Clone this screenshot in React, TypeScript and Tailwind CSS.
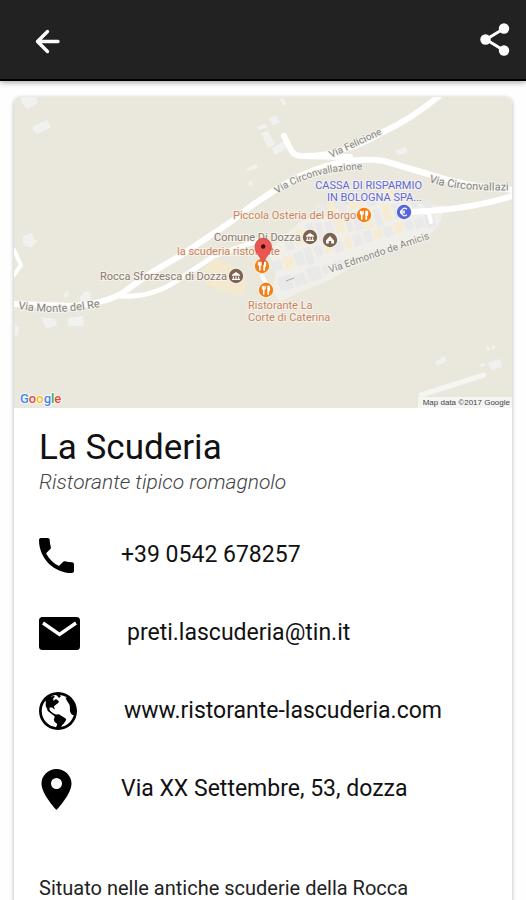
import React from "react";
import { IoMdCall, IoMdGlobe } from "react-icons/io";

function Building({ points }: { points: string }) {
  return <polygon points={points} fill="#f1f1ef" />;
}

function Badge({ x, y, color, children }: { x: number; y: number; color: string; children: React.ReactNode }) {
  return (
    <g transform={`translate(${x} ${y})`}>
      <circle r="8" fill="#f5f3ec" />
      <circle r="7.2" fill={color} />
      {children}
    </g>
  );
}

function Fork() {
  return (
    <g stroke="#fff" strokeLinecap="round" fill="none">
      <path d="M-2.2 -3.5V4" strokeWidth="1.6" />
      <path d="M-3.6 -3.8V-1H-0.8V-3.8" strokeWidth="1.1" />
      <path d="M2.2 -3.5V4M3.2 -3.3V0" strokeWidth="1.8" />
    </g>
  );
}

function Museum() {
  return (
    <path
      d="M-4 -1.2L0 -4L4 -1.2V-0.2H-4ZM-3.2 0.4H-2V2.6H-3.2ZM-0.6 0.4H0.6V2.6H-0.6ZM2 0.4H3.2V2.6H2ZM-4 2.8H4V4H-4Z"
      fill="#fff"
    />
  );
}

const houses = [
  "21,97 36,97 38,103 27,109 22,103",
  "33,126 47,120 51,127 38,134 33,131",
  "23,236 32,233 35,243 26,247 23,243",
  "24,240 38,240 32,247 26,246",
  "64,293 68,290 69,296 64,297",
  "80,297 84,292 90,291 91,301 80,302",
  "41,317 55,319 57,326 46,328",
  "68,318 83,316 84,326 68,326",
  "15,326 19,327 18,335 15,336",
  "257,127 265,124 268,127 259,130",
  "269,119 276,115 280,123 273,125",
  "261,133 268,131 275,144 268,148",
  "272,148 284,141 287,148 275,155",
  "280,99 283,98 286,104 283,106",
  "246,169 256,164 258,168 248,171",
  "248,183 252,180 253,185 249,186",
  "396,150 406,147 407,153 397,155",
  "435,362 445,356 447,361 437,366",
  "488,363 500,359 502,367 491,370",
  "486,347 489,346 490,350 487,351",
  "491,346 495,345 495,349 492,350",
  "480,364 484,363 485,366 481,367",
];

const grey = "#e9e9e9";
const cream = "#f6ecd4";

/* Village blocks, in a frame turned to run along Via Edmondo de Amicis: x, y, width, height, fill. */
const blocks: [number, number, number, number, string][] = [
  [0, -14, 11, 10, grey],
  [13, -15, 10, 13, cream],
  [25, -16, 9, 14, grey],
  [36, -18, 7, 18, grey],
  [2, 3, 14, 14, grey],
  [18, 5, 12, 12, grey],
  [32, 3, 14, 13, grey],
  [48, 4, 9, 9, grey],
  [20, -34, 8, 14, grey],
  [30, -38, 10, 16, cream],
  [44, -40, 8, 19, grey],
  [54, -38, 7, 19, grey],
  [63, -36, 8, 20, grey],
  [73, -36, 9, 14, cream],
  [84, -38, 6, 18, grey],
  [92, -36, 8, 17, grey],
  [102, -36, 9, 18, cream],
  [113, -34, 7, 18, grey],
  [122, -36, 9, 16, cream],
  [133, -34, 7, 16, grey],
  [142, -32, 8, 15, cream],
  [152, -30, 6, 14, grey],
  [46, -16, 8, 10, grey],
  [56, -15, 8, 9, cream],
  [66, -14, 9, 10, grey],
  [77, -16, 7, 12, cream],
  [86, -16, 9, 12, grey],
  [97, -16, 8, 11, grey],
  [107, -15, 9, 10, cream],
  [118, -14, 9, 10, grey],
  [129, -15, 9, 11, cream],
  [140, -14, 8, 10, grey],
  [150, -13, 9, 10, grey],
  [161, -14, 9, 14, grey],
  [164, -28, 8, 12, grey],
  [60, 4, 10, 6, grey],
  [72, 5, 12, 6, grey],
  [86, 5, 10, 6, grey],
  [98, 5, 14, 6, grey],
  [114, 5, 10, 6, grey],
  [60, -56, 9, 14, grey],
  [71, -54, 8, 12, cream],
  [81, -52, 8, 12, grey],
  [92, -50, 14, 10, cream],
  [110, -48, 10, 10, grey],
  [124, -50, 16, 12, cream],
];

function MapPicture() {
  return (
    <svg viewBox="14 97 498 311" className="block w-full" role="img" aria-label="Mappa di Dozza" fontFamily="Roboto, sans-serif">
      <rect x="14" y="97" width="498" height="311" fill="#eae8dd" />
      {houses.map((p) => (
        <Building key={p} points={p} />
      ))}
      <polygon points="200,276 213,259 222,260 232,265 240,270 247,280 243,295 234,295 222,291 206,284" fill="#f3e9cf" />
      <polygon points="268,252 284,236 300,222 326,212 346,206 366,200 390,198 424,204 446,206 438,226 428,236 408,244 376,256 350,268 330,280 300,292 280,302 272,290 276,274" fill="#f0efea" />
      <g transform="translate(274 276) rotate(-17)">
        {blocks.map(([x, y, w, h, fill]) => (
          <rect key={`${x} ${y}`} x={x} y={y} width={w} height={h} fill={fill} />
        ))}
      </g>
      <g stroke="#fff" fill="none" strokeLinecap="round" strokeLinejoin="round">
        <path d="M284 136L290 148Q293 156 302 156L350 157" strokeWidth="6" />
        <path d="M302 156Q340 157 383 132Q410 120 439 96" strokeWidth="6" />
        <path d="M518 190Q470 188 428 174L384 161Q345 155 300 176Q262 196 232 221L180 256Q150 272 124 292Q105 304 70 306L14 304" strokeWidth="6" />
        <path d="M120 296Q150 298 175 282L214 256L260 240" strokeWidth="5" />
        <path d="M14 250L21 265L14 275" strokeWidth="4" />
        <path d="M408 212L428 211Q475 208 516 195" strokeWidth="6" />
        <path d="M428 210L431 222" strokeWidth="4" />
        <path d="M262 276L270 290" strokeWidth="4" />
        <path d="M421 395L484 375" strokeWidth="5" stroke="#f5f5f2" />
      </g>
      <path d="M286 281L294 278" stroke="#a9a9a9" strokeWidth="1" />

      <defs>
        <path id="circonvallazione" d="M277 194Q318 167 376 170" />
        <path id="circonvallazioneEst" d="M429 182Q465 194 530 189" />
        <path id="monteDelRe" d="M18 309Q60 316 104 306" />
        <path id="edmondo" d="M330 273Q380 256 440 235" />
      </defs>
      <g fill="#85837d" stroke="#f4f3ee" strokeWidth="2" paintOrder="stroke" fontSize="10">
        <text transform="translate(331 158) rotate(-25)">Via Felicione</text>
        <text><textPath href="#circonvallazione">Via Circonvallazione</textPath></text>
        <text fontSize="11"><textPath href="#circonvallazioneEst">Via Circonvallazi</textPath></text>
        <text fontSize="11"><textPath href="#monteDelRe">Via Monte del Re</textPath></text>
        <text><textPath href="#edmondo">Via Edmondo de Amicis</textPath></text>
      </g>
      <g stroke="#f4f3ee" strokeWidth="2" paintOrder="stroke" fontSize="11">
        <g fill="#6266d8">
          <text x="422" y="189" textAnchor="end">CASSA DI RISPARMIO</text>
          <text x="422" y="201" textAnchor="end">IN BOLOGNA SPA...</text>
        </g>
        <g fill="#cd8256">
          <text x="233" y="219">Piccola Osteria del Borgo</text>
          <text x="177" y="255">la scuderia ristorante</text>
          <text x="248" y="309">Ristorante La</text>
          <text x="248" y="321">Corte di Caterina</text>
        </g>
        <g fill="#8a776c">
          <text x="214" y="241">Comune Di Dozza</text>
          <text x="100" y="280">Rocca Sforzesca di Dozza</text>
        </g>
      </g>

      <Badge x={364} y={215} color="#f57f17"><Fork /></Badge>
      <Badge x={262} y={266} color="#f57f17"><Fork /></Badge>
      <Badge x={266} y={290} color="#f57f17"><Fork /></Badge>
      <Badge x={310} y={237} color="#7d6350"><Museum /></Badge>
      <Badge x={236} y={276} color="#7d6350"><Museum /></Badge>
      <Badge x={330} y={240} color="#7d6350">
        <path d="M-4 3.5V0.5L0 -4L4 0.5V3.5H1.2V1H-1.2V3.5Z" fill="#fff" />
      </Badge>
      <Badge x={404} y={212} color="#5665d8">
        <path d="M3 -2.8A3.6 3.6 0 1 0 3 2.8M-4 -0.8H1M-4 0.9H1" stroke="#fff" strokeWidth="1.2" fill="none" />
      </Badge>

      <path d="M263 265C262 257 255 254 255 246.5A8.2 8.2 0 0 1 271.4 246.5C271.4 254 264 257 263 265Z" fill="#ec5551" stroke="#c94a46" strokeWidth="0.8" />
      <circle cx="263.2" cy="246.5" r="2.2" fill="#3a0f0f" />

      <g fontSize="13" fontWeight="500" stroke="#fff" strokeWidth="1.5" paintOrder="stroke">
        <text x="20" y="403">
          <tspan fill="#4285f4">G</tspan>
          <tspan fill="#ea4335">o</tspan>
          <tspan fill="#fbbc05">o</tspan>
          <tspan fill="#4285f4">g</tspan>
          <tspan fill="#34a853">l</tspan>
          <tspan fill="#ea4335">e</tspan>
        </text>
      </g>
      <rect x="418" y="397" width="94" height="11" fill="#f5f5f3" />
      <text x="510" y="405" textAnchor="end" fontSize="8" fontFamily="Liberation Sans, sans-serif" fill="#444">Map data ©2017 Google</text>
    </svg>
  );
}

function MailIcon() {
  return (
    <svg viewBox="0 0 41 33" className="h-[33px] w-[41px]" aria-hidden>
      <rect width="41" height="33" rx="3.5" />
      <path d="M4 6L20.5 17.5L37 6" fill="none" stroke="#fff" strokeWidth="3.4" />
    </svg>
  );
}

function PinIcon() {
  return (
    <svg viewBox="0 0 35 41" className="h-[41px] w-[35px]" aria-hidden>
      <path
        fillRule="evenodd"
        d="M17.5 0C9.3 0 2.5 6.5 2.5 14.5C2.5 25.4 17.5 41 17.5 41S32.5 25.4 32.5 14.5C32.5 6.5 25.7 0 17.5 0ZM17.5 20A5.5 5.5 0 1 1 17.5 9A5.5 5.5 0 0 1 17.5 20Z"
      />
    </svg>
  );
}

const row = "flex h-[78px] items-center gap-[47px]";
const rowText = "text-[23px] leading-8 text-[#111]";

export default function App() {
  return (
    <div className="h-screen overflow-hidden bg-[#fefefe] font-['Roboto',sans-serif]">
      <header className="flex h-[81px] items-center justify-between border-b-2 border-black bg-[#222] pr-4 pl-8 shadow-[0_1px_6px_rgba(0,0,0,0.4)]">
        <button type="button" aria-label="Indietro">
          <svg viewBox="0 0 30 30" className="size-[30px]" fill="none" stroke="#fff" strokeWidth="3.4" strokeLinecap="round" strokeLinejoin="round">
            <path d="M15.5 6.5L5.5 16.5L15.5 26.5M5.5 16.5H26" />
          </svg>
        </button>
        <button type="button" aria-label="Condividi">
          <svg viewBox="0 0 30 34" className="h-[34px] w-[30px]" fill="#fff">
            <path d="M24 5.5L6 16.5L24 27.5" fill="none" stroke="#fff" strokeWidth="3" />
            <circle cx="5.500" cy="16.5" r="5.2" />
            <circle cx="24" cy="5.5" r="5.2" />
            <circle cx="24" cy="27.5" r="5.2" />
          </svg>
        </button>
      </header>

      <main className="mx-[14px] mt-4 overflow-hidden rounded-md bg-white pb-10 shadow-[0_1px_4px_rgba(0,0,0,0.3)]">
        <MapPicture />
        <section className="px-[25px] pt-5">
          <h1 className="text-[35px] leading-10 text-[#111]">La Scuderia</h1>
          <p className="text-[21px] leading-7 font-light text-[#444] italic">Ristorante tipico romagnolo</p>

          <ul className="mt-5">
            <li className={row}>
              <IoMdCall viewBox="64 64 384 384" className="size-[35px]" aria-hidden />
              <a href="tel:+390542678257" className={rowText}>+39 0542 678257</a>
            </li>
            <li className={row}>
              <MailIcon />
              <a href="mailto:preti.lascuderia@tin.it" className={rowText}>preti.lascuderia@tin.it</a>
            </li>
            <li className={row}>
              <IoMdGlobe viewBox="48 48 416 416" className="size-[38px]" aria-hidden />
              <a href="http://www.ristorante-lascuderia.com" className={rowText}>www.ristorante-lascuderia.com</a>
            </li>
            <li className={row}>
              <PinIcon />
              <span className={rowText}>Via XX Settembre, 53, dozza</span>
            </li>
          </ul>

          <p className="mt-11 text-[20px] leading-8 text-[#222]">
            Situato nelle antiche scuderie della Rocca
          </p>
        </section>
      </main>
    </div>
  );
}
